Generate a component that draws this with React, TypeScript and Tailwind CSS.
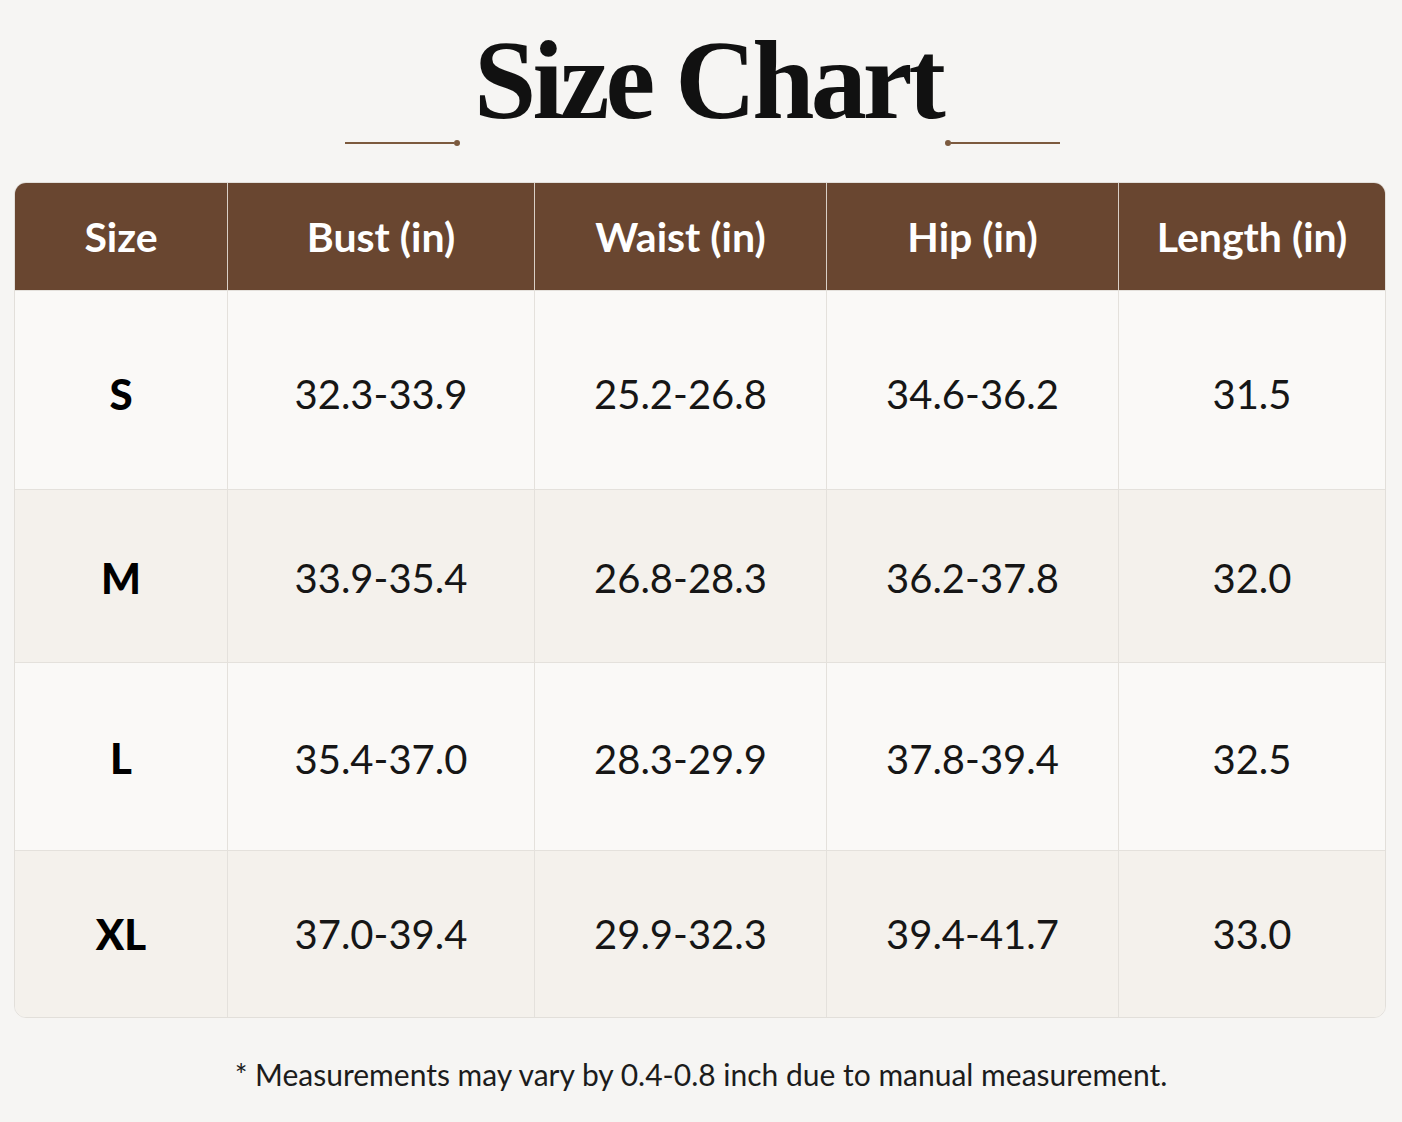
const columns = ['Size', 'Bust (in)', 'Waist (in)', 'Hip (in)', 'Length (in)'];
const colWidths = ['w-[212px]', 'w-[307px]', 'w-[292px]', 'w-[292px]', 'flex-1'];

const rows = [
  { size: 'S', values: ['32.3-33.9', '25.2-26.8', '34.6-36.2', '31.5'], h: 'h-[199px]', pad: 'pt-[8px]', bg: 'bg-[#faf9f7]' },
  { size: 'M', values: ['33.9-35.4', '26.8-28.3', '36.2-37.8', '32.0'], h: 'h-[173px]', pad: 'pt-[4px]', bg: 'bg-[#f4f1ec]' },
  { size: 'L', values: ['35.4-37.0', '28.3-29.9', '37.8-39.4', '32.5'], h: 'h-[188px]', pad: 'pt-[4px]', bg: 'bg-[#faf9f7]' },
  { size: 'XL', values: ['37.0-39.4', '29.9-32.3', '39.4-41.7', '33.0'], h: 'h-[167px]', pad: '', bg: 'bg-[#f4f1ec]' },
];

function Divider({ dotRight }: { dotRight: boolean }) {
  return (
    <div className={`flex items-center w-[115px] ${dotRight ? '' : 'flex-row-reverse'}`}>
      <div className="h-[2px] flex-1 bg-[#7c5a3e]" />
      <div className="w-[6px] h-[6px] rounded-full bg-[#7c5a3e]" />
    </div>
  );
}

export default function App() {
  return (
    <div
      className="w-[1402px] h-[1122px] bg-[#f6f5f3] flex flex-col items-center pt-[20px]"
      style={{ fontFamily: 'Lato, "Noto Sans", sans-serif' }}
    >
      <h1
        className="text-[112px] leading-[120px] font-bold text-[#111] tracking-[-0.035em] pl-[14px]"
        style={{ fontFamily: '"Liberation Serif", "DejaVu Serif", serif' }}
      >
        Size Chart
      </h1>
      <div className="flex items-center gap-[485px] pl-[2px]">
        <Divider dotRight />
        <Divider dotRight={false} />
      </div>

      <div className="mt-[36px] w-[1372px] ml-[-2px] rounded-[12px] border border-[#e2dfda] overflow-hidden">
        <div className="flex h-[107px] bg-[#694630]">
          {columns.map((c, i) => (
            <div
              key={c}
              className={`${colWidths[i]} flex items-center justify-center text-white text-[41px] font-bold ${
                i > 0 ? 'border-l border-[#d9cfc6]' : ''
              }`}
            >
              {c}
            </div>
          ))}
        </div>
        {rows.map((r) => (
          <div key={r.size} className={`flex ${r.h} ${r.bg} border-t border-[#e4e1dc]`}>
            <div className={`${colWidths[0]} ${r.pad} flex items-center justify-center text-[42px] font-black text-black`}>
              {r.size}
            </div>
            {r.values.map((v, i) => (
              <div
                key={i}
                className={`${colWidths[i + 1]} ${r.pad} flex items-center justify-center text-[40px] text-[#161616] border-l border-[#e4e1dc]`}
              >
                {v}
              </div>
            ))}
          </div>
        ))}
      </div>

      <p className="mt-[34px] text-[30px] text-[#1c1c1c]">
        * Measurements may vary by 0.4-0.8 inch due to manual measurement.
      </p>
    </div>
  );
}
